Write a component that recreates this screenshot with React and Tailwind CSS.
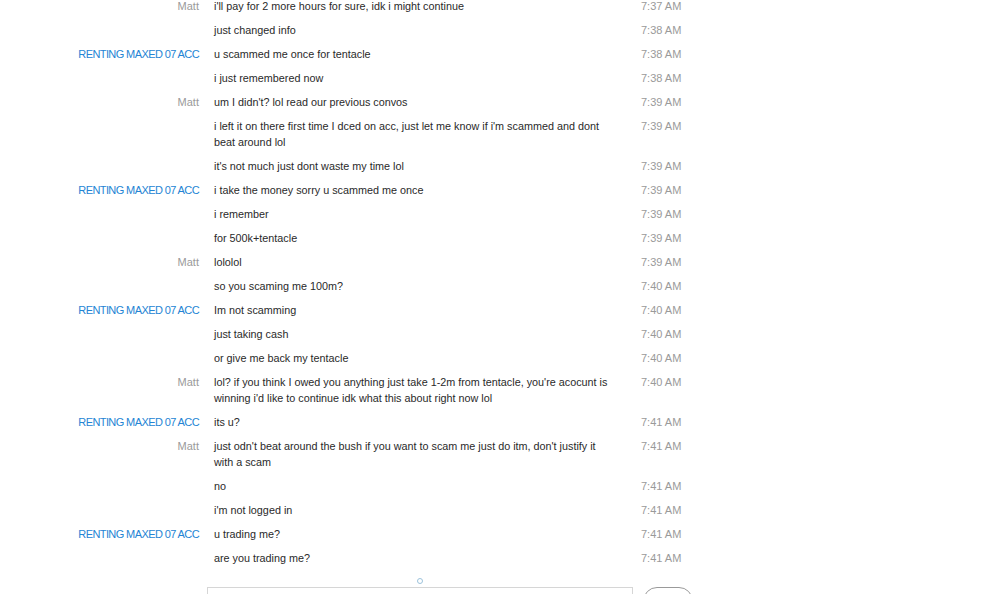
const ME = "Matt";
const THEM = "RENTING MAXED 07 ACC";

const messages = [
  { from: ME, lines: ["i'll pay for 2 more hours for sure, idk i might continue"], time: "7:37 AM" },
  { lines: ["just changed info"], time: "7:38 AM" },
  { from: THEM, lines: ["u scammed me once for tentacle"], time: "7:38 AM" },
  { lines: ["i just remembered now"], time: "7:38 AM" },
  { from: ME, lines: ["um I didn't? lol read our previous convos"], time: "7:39 AM" },
  {
    lines: ["i left it on there first time I dced on acc, just let me know if i'm scammed and dont", "beat around lol"],
    time: "7:39 AM",
  },
  { lines: ["it's not much just dont waste my time lol"], time: "7:39 AM" },
  { from: THEM, lines: ["i take the money sorry u scammed me once"], time: "7:39 AM" },
  { lines: ["i remember"], time: "7:39 AM" },
  { lines: ["for 500k+tentacle"], time: "7:39 AM" },
  { from: ME, lines: ["lololol"], time: "7:39 AM" },
  { lines: ["so you scaming me 100m?"], time: "7:40 AM" },
  { from: THEM, lines: ["Im not scamming"], time: "7:40 AM" },
  { lines: ["just taking cash"], time: "7:40 AM" },
  { lines: ["or give me back my tentacle"], time: "7:40 AM" },
  {
    from: ME,
    lines: [
      "lol? if you think I owed you anything just take 1-2m from tentacle, you're acocunt is",
      "winning i'd like to continue idk what this about right now lol",
    ],
    time: "7:40 AM",
  },
  { from: THEM, lines: ["its u?"], time: "7:41 AM" },
  {
    from: ME,
    lines: ["just odn't beat around the bush if you want to scam me just do itm, don't justify it", "with a scam"],
    time: "7:41 AM",
  },
  { lines: ["no"], time: "7:41 AM" },
  { lines: ["i'm not logged in"], time: "7:41 AM" },
  { from: THEM, lines: ["u trading me?"], time: "7:41 AM" },
  { lines: ["are you trading me?"], time: "7:41 AM" },
];

function Row({ msg }) {
  return (
    <div className="flex py-[4px] leading-[16px]">
      <div
        className={
          "w-[199px] shrink-0 text-right whitespace-nowrap " +
          (msg.from === THEM ? "text-[#2484d4] tracking-[-0.6px]" : "text-[#9a9a9a]")
        }
      >
        {msg.from || ""}
      </div>
      <div className="ml-[15px] w-[412px] shrink-0 text-[10.8px] text-[#2a2a2a]">
        {msg.lines.map((l, i) => (
          <div key={i} className="whitespace-nowrap">
            {l}
          </div>
        ))}
      </div>
      <div className="ml-[15px] whitespace-nowrap text-[#9a9a9a]">{msg.time}</div>
    </div>
  );
}

export default function App() {
  return (
    <div
      className="h-[594px] w-[984px] overflow-hidden bg-white text-[11px]"
      style={{ fontFamily: '"Liberation Sans", Arial, sans-serif' }}
    >
      <div className="-mt-[6px]">
        {messages.map((m, i) => (
          <Row key={i} msg={m} />
        ))}
      </div>
      <div className="ml-[207px] mt-[8px] flex w-[426px] justify-center">
        <div className="h-[6px] w-[6px] rounded-full border border-[#9cc3dc]" />
      </div>
      <div className="mt-[3px] flex items-start">
        <div className="ml-[207px] h-[40px] w-[426px] border border-[#d6d6d6]" />
        <div className="ml-[10px] h-[30px] w-[50px] rounded-[14px] border border-[#9a9a9a]" />
      </div>
    </div>
  );
}
